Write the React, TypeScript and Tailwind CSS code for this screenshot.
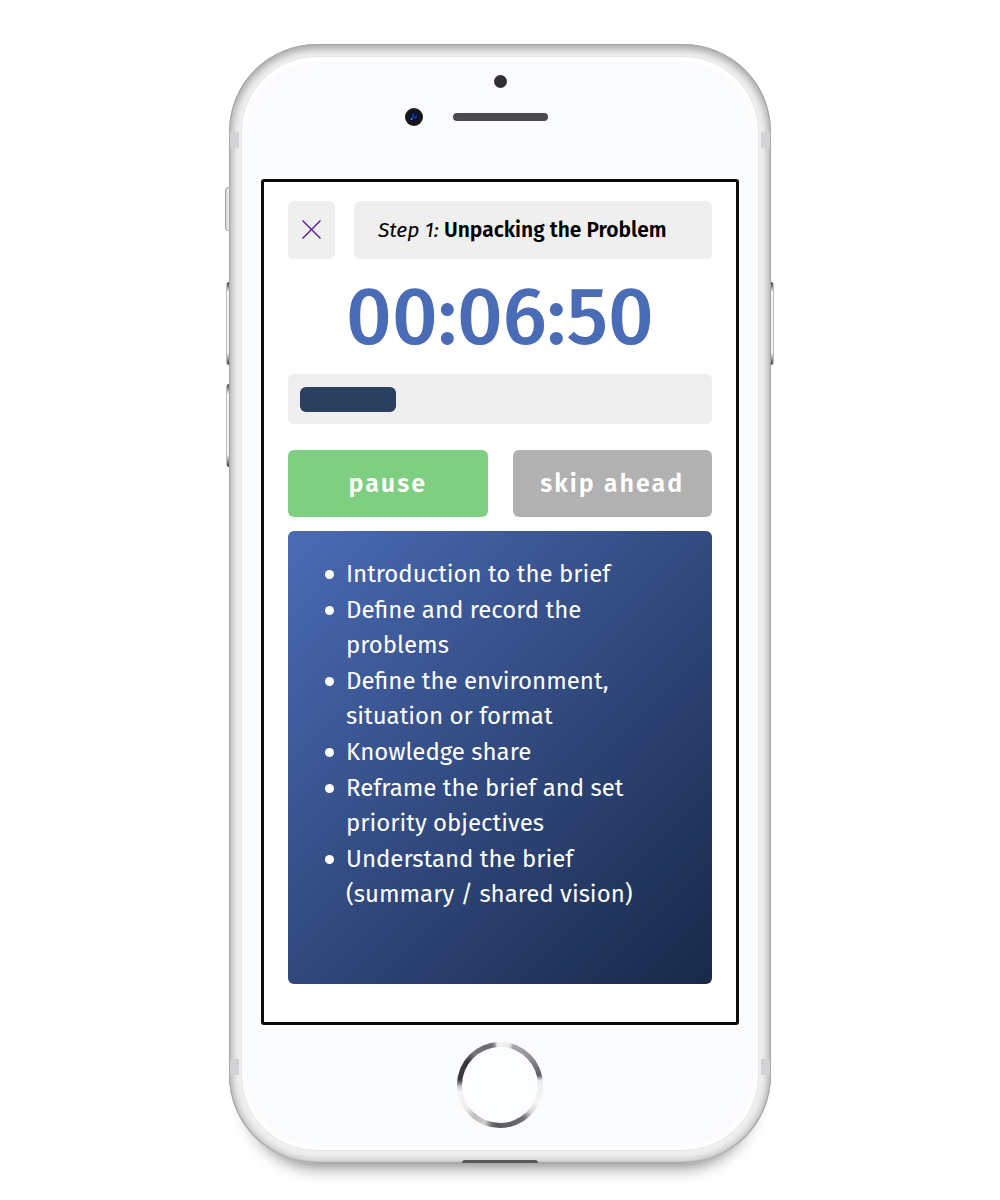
import React from "react";

const agenda = [
  "Introduction to the brief",
  "Define and record the problems",
  "Define the environment, situation or format",
  "Knowledge share",
  "Reframe the brief and set priority objectives",
  "Understand the brief (summary / shared vision)",
];

function SideKeys() {
  return (
    <div aria-hidden="true">
      <div className="absolute inset-y-0 right-full flex flex-col items-end pt-[143px]">
        <span className="h-11 w-1 rounded-l-sm border-y border-l border-[#a5a5a6] bg-linear-to-r from-[#d0d0d0] to-[#f4f4f4]" />
        <span className="mt-[51px] h-[83px] w-[3px] rounded-l-sm border-l border-[#bdbdbd] bg-[linear-gradient(#333,#f5f5f5_12%,#f5f5f5_85%,#333)]" />
        <span className="mt-[19px] h-[83px] w-[3px] rounded-l-sm border-l border-[#bdbdbd] bg-[linear-gradient(#333,#f5f5f5_12%,#f5f5f5_85%,#333)]" />
      </div>
      <div className="absolute inset-y-0 left-full pt-[238px]">
        <span className="block h-[83px] w-[3px] rounded-r-sm border-r border-[#bdbdbd] bg-[linear-gradient(#333,#f5f5f5_12%,#f5f5f5_85%,#333)]" />
      </div>
    </div>
  );
}

function AntennaBands() {
  return (
    <div
      aria-hidden="true"
      className="pointer-events-none absolute inset-0 flex flex-col justify-between px-px pt-[88px]"
    >
      <div className="flex justify-between">
        <span className="h-4 w-[9px] bg-[#d2d2d4]" />
        <span className="h-4 w-[9px] bg-[#d2d2d4]" />
      </div>
      <div className="flex flex-col gap-[85px]">
        <div className="flex justify-between">
          <span className="h-4 w-[9px] bg-[#d2d2d4]" />
          <span className="h-4 w-[9px] bg-[#d2d2d4]" />
        </div>
        <span className="h-[3px] w-[76px] self-center rounded-t-sm bg-[#58585a]" />
      </div>
    </div>
  );
}

function Sensors() {
  return (
    <div className="pt-[17px] pb-[53px]" aria-hidden="true">
      <div className="mx-auto size-[13px] rounded-full bg-[#2f3032]" />
      <div className="mt-5 grid grid-cols-[1fr_auto_1fr] items-center">
        <svg viewBox="0 0 18 18" className="mr-[30px] size-[18px] justify-self-end">
          <circle cx="9" cy="9" r="9" fill="#171719" />
          <circle cx="9" cy="9" r="5" fill="#0a1135" />
          <circle cx="9.5" cy="8" r="2.8" fill="#17328a" />
          <circle cx="10.5" cy="7" r="1.2" fill="#080d22" />
          <circle cx="6.5" cy="11" r="1" fill="#6f86c4" />
        </svg>
        <div className="h-2 w-[95px] rounded-full bg-[#4b4a4d]" />
      </div>
    </div>
  );
}

function HomeButton() {
  return (
    <div className="flex justify-center pt-[17px] pb-[21px]">
      <button
        type="button"
        aria-label="Home"
        className="size-[86px] rounded-full bg-[conic-gradient(#f4f4f4_0deg,#e6e6e6_14deg,#aaa_18deg,#8c8c8e_50deg,#5f5f62_76deg,#ececee_84deg,#f6f6f7_115deg,#d5d5d6_132deg,#707073_144deg,#59595c_185deg,#77777a_193deg,#cfcfd0_202deg,#bcbcbe_220deg,#efeff0_235deg,#f4f4f5_260deg,#c8c8ca_268deg,#3d3d40_277deg,#353538_305deg,#77777a_320deg,#69696c_346deg,#8b8b8d_352deg,#eee_356deg)] p-[5px]"
      >
        <span className="block size-full rounded-full bg-[#fcfdff]" />
      </button>
    </div>
  );
}

function Screen() {
  const progress = 24;
  return (
    <main className="rounded-[3px] border-[3px] border-[#0c0c0d] bg-white px-6 pt-[19px] pb-[38px]">
      <header className="flex gap-[19px]">
        <a
          href="#close"
          aria-label="Close"
          className="flex w-[47px] shrink-0 items-center justify-center rounded-md bg-[#efefef]"
        >
          <svg viewBox="0 0 20 20" className="size-5" fill="none" stroke="#551a9b" strokeWidth="1.4">
            <path d="M.5.5 18.5 18.5M18.5.5.5 18.5" />
          </svg>
        </a>
        <h1 className="flex-1 rounded-md bg-[#efefef] px-6 py-[14px] text-[21px] leading-[30px] font-semibold whitespace-nowrap text-black">
          <em className="font-normal">Step 1:</em> Unpacking the Problem
        </h1>
      </header>

      <div role="timer" className="pt-2 pb-1.5 text-center text-[80px] leading-[101px] font-medium text-[#4a6bb5]">
        00:06:50
      </div>

      <div
        role="progressbar"
        aria-label="Step progress"
        aria-valuemin={0}
        aria-valuemax={100}
        aria-valuenow={progress}
        className="rounded-md bg-[#efefef] px-3 pt-[13px] pb-3"
      >
        <div className="h-[25px] rounded-md bg-[#2b4060]" style={{ width: `${progress}%` }} />
      </div>

      <div className="mt-[26px] grid grid-cols-2 gap-[25px] text-[25px] leading-[35px] font-semibold tracking-[2px] text-white">
        <button type="button" className="rounded-md bg-[#7ecf82] pt-[17px] pb-[15px]">
          pause
        </button>
        <button type="button" className="rounded-md bg-[#b1b1b1] pt-[17px] pb-[15px] whitespace-nowrap">
          skip ahead
        </button>
      </div>

      <section className="mt-[14px] rounded-md bg-linear-[135deg,#4a6bb5,#182848] pt-[26px] pr-10 pb-[72px] pl-[37px]">
        <ul className="flex flex-col gap-px text-[24px] leading-[35px] text-white">
          {agenda.map((item) => (
            <li
              key={item}
              className="flex gap-3 before:mt-[13px] before:size-[9px] before:shrink-0 before:rounded-full before:bg-white"
            >
              {item}
            </li>
          ))}
        </ul>
      </section>
    </main>
  );
}

export default function App() {
  return (
    <div className="min-h-screen bg-white px-4 pt-11 pb-9 font-['Fira_Sans','Noto_Sans',sans-serif]">
      <div className="relative mx-auto max-w-[542px] rounded-[88px] bg-[#f1f1f2] p-3 shadow-[inset_0_0_1px_1px_#a6a6a8,inset_0_3px_8px_1px_#a9a9ab,inset_0_0_8px_3px_#cbcbcd,0_22px_18px_-20px_#6a6a6d]">
        <SideKeys />
        <AntennaBands />
        <div className="rounded-[76px] border border-[#e6e6e8] bg-[#fafbfd] px-[19px] py-px shadow-[inset_0_0_6px_4px_#ffffff]">
          <Sensors />
          <Screen />
          <HomeButton />
        </div>
      </div>
    </div>
  );
}
